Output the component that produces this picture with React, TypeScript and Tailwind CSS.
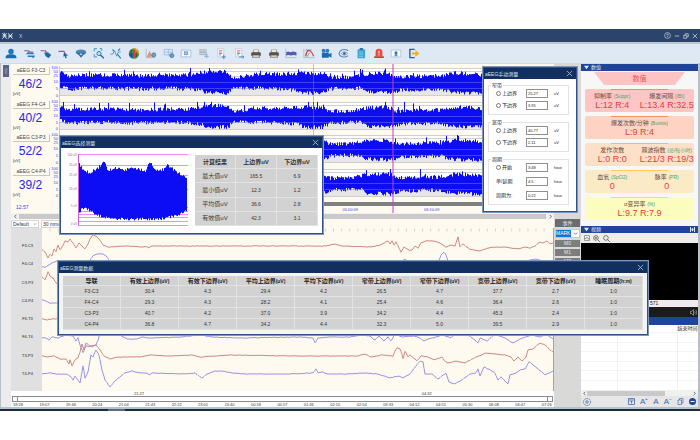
import { ReactNode } from "react";
import clsx from "clsx";

type Point = [number, number];

const CJK = "font-['Liberation_Sans','Noto_Sans_CJK_SC',sans-serif]";

const createRandom = (seed: number) => {
  let s = seed;
  return () => {
    s = (s * 16807) % 2147483647;
    return s / 2147483647;
  };
};

const sample = (points: Point[], x: number) => {
  for (let i = 1; i < points.length; i++) {
    const [x0, y0] = points[i - 1];
    const [x1, y1] = points[i];
    if (x <= x1) return y0 + ((y1 - y0) * (x - x0)) / (x1 - x0);
  }
  return points[points.length - 1][1];
};

// vertical bars between an upper and a lower envelope
const buildBars = (
  top: Point[],
  bottom: Point[],
  width: number,
  seed: number,
  jitter: number,
  spike: number,
) => {
  const random = createRandom(seed);
  let d = "";
  for (let x = 0; x < width; x++) {
    const peak = random() > 0.94 ? random() * spike : 0;
    const up = sample(top, x) - random() * jitter - peak;
    const down = sample(bottom, x) + random() * jitter - jitter / 2;
    d += `M${x + 0.5} ${Math.max(0, up).toFixed(1)}V${down.toFixed(1)}`;
  }
  return d;
};

// trace that follows its points, with small noise in between
const buildTrace = (points: Point[], seed: number) => {
  const random = createRandom(seed);
  const last = points[points.length - 1][0];
  let d = `M${points[0][0]} ${points[0][1]}`;
  for (let x = points[0][0] + 1; x <= last; x++) {
    const noise = (random() - 0.5) * 0.6;
    d += `L${x} ${(sample(points, x) + noise).toFixed(1)}`;
  }
  return d;
};

const aeegTop: Point[] = [
  [0, 6], [8, 10], [20, 9], [50, 9], [80, 10], [110, 9], [130, 9], [142, 6],
  [165, 5], [172, 11], [182, 11], [195, 8], [220, 8], [245, 7], [262, 8],
  [270, 11], [290, 11], [305, 8], [328, 7], [336, 11], [360, 10], [380, 10],
  [395, 7], [415, 8], [430, 12], [494, 10],
];
const aeegBottom: Point[] = [
  [0, 18], [8, 21], [40, 20], [80, 21], [110, 20], [140, 22], [148, 25],
  [168, 25], [173, 20], [200, 20], [236, 22], [244, 25], [262, 25], [270, 21],
  [300, 20], [306, 24], [330, 25], [340, 22], [380, 21], [390, 24], [415, 25],
  [494, 22],
];

const selectTop: Point[] = [
  [0, 12], [4, 18], [10, 20], [16, 17], [20, 15], [24, 8], [29, 18], [36, 15],
  [43, 18], [51, 16], [60, 17], [66, 19], [70, 9], [76, 18], [84, 17],
  [88, 12], [94, 17], [101, 22], [108, 25],
];
const selectBottom: Point[] = [
  [0, 60], [3, 54], [8, 55], [16, 60], [26, 64], [40, 65], [60, 65], [80, 65],
  [90, 63], [98, 61], [108, 57],
];

const aeegRows = [
  { label: "aEEG F3-C3", value: "46/2" },
  { label: "aEEG F4-C4", value: "40/2" },
  { label: "aEEG C3-P3", value: "52/2" },
  { label: "aEEG C4-P4", value: "39/2" },
];

const aeegScale = [
  { text: "100", height: "h-[4px]" },
  { text: "50", height: "h-[4px]" },
  { text: "25", height: "h-[4px]" },
  { text: "10", height: "h-[8px]" },
  { text: "5", height: "h-[6px]" },
  { text: "0", height: "h-[7px]" },
];

const channels = ["F3-C3", "F4-C4", "C3-P3", "C4-P4", "F3-T3", "F4-T4", "T3-P3", "T4-P4"];

const traces: { color: string; points: Point[] }[] = [
  {
    color: "#cf8880",
    points: [
      [42, 250], [45, 252], [48, 258], [50, 254], [52, 256], [54, 249], [56, 252],
      [58, 245], [60, 250], [62, 247], [65, 241], [68, 242], [70, 239], [73, 243],
      [76, 248], [79, 243], [82, 246], [85, 249], [88, 244], [90, 239], [93, 235],
      [96, 236], [99, 239], [103, 245], [108, 247], [125, 246], [147, 247],
      [149, 248], [151, 246], [230, 246], [325, 246], [335, 244], [342, 246],
      [371, 247], [380, 245], [388, 241], [390, 244], [392, 241], [394, 245],
      [396, 242], [398, 246], [401, 252], [404, 247], [409, 250], [412, 250],
      [415, 246], [418, 248], [421, 243], [425, 241], [433, 241], [440, 243],
      [446, 247], [450, 245], [455, 246], [458, 237], [460, 247], [463, 244],
      [469, 249], [474, 250], [480, 251], [488, 248], [495, 247], [505, 247],
      [518, 249], [524, 247], [530, 248], [535, 246], [540, 242], [543, 243],
      [547, 241], [550, 244], [553, 243],
    ],
  },
  {
    color: "#9595e6",
    points: [
      [42, 267], [46, 267], [50, 264], [54, 262], [58, 261], [86, 266], [90, 260],
      [93, 256], [97, 254], [103, 254], [106, 256], [110, 261], [115, 266],
      [390, 266], [402, 261], [405, 259], [408, 263], [438, 263], [441, 255],
      [444, 252], [446, 255], [449, 264], [520, 264], [530, 260], [536, 259], [553, 264],
    ],
  },
  {
    color: "#cf8880",
    points: [
      [42, 277], [45, 280], [48, 272], [50, 276], [53, 278], [56, 283], [60, 285], [553, 283],
    ],
  },
  {
    color: "#9595e6",
    points: [[42, 300], [46, 301], [50, 303], [58, 303], [553, 301]],
  },
  {
    color: "#cf8880",
    points: [[42, 319], [47, 320], [50, 319], [553, 319]],
  },
  {
    color: "#9595e6",
    points: [
      [42, 338], [46, 338], [49, 340], [52, 337], [58, 338], [66, 335], [73, 336],
      [76, 341], [78, 338], [80, 345], [83, 353], [86, 346], [92, 347], [96, 345],
      [98, 340], [100, 333], [117, 333], [123, 337], [128, 339], [137, 339],
      [142, 337], [150, 338], [180, 337], [200, 335], [212, 337], [240, 338],
      [300, 337], [313, 338], [315, 343], [318, 338], [330, 337], [350, 337],
      [362, 335], [370, 336], [375, 340], [379, 336], [384, 341], [388, 337],
      [391, 341], [395, 334], [402, 337], [414, 336], [420, 338], [424, 341],
      [428, 339], [436, 337], [443, 335], [451, 338], [456, 333], [468, 335],
      [475, 340], [478, 343], [480, 338], [487, 341], [495, 334], [505, 338],
      [513, 343], [520, 339], [532, 335], [540, 337], [546, 334], [553, 339],
    ],
  },
  {
    color: "#cf8880",
    points: [
      [42, 356], [48, 357], [54, 356], [60, 359], [66, 359], [69, 364], [70, 360],
      [72, 366], [75, 360], [78, 358], [80, 352], [82, 344], [84, 350], [86, 343],
      [90, 346], [96, 345], [100, 350], [104, 356], [110, 359], [118, 357],
      [140, 357], [150, 355], [170, 356], [192, 355], [200, 357], [230, 355],
      [300, 356], [357, 356], [365, 354], [371, 357], [382, 355], [393, 356],
      [395, 351], [397, 348], [400, 349], [402, 354], [403, 359], [405, 351],
      [408, 357], [410, 355], [414, 358], [417, 361], [421, 356], [428, 357],
      [434, 360], [442, 357], [445, 361], [448, 363], [456, 361], [465, 363],
      [474, 358], [486, 353], [505, 355], [511, 357], [514, 361], [518, 357],
      [522, 361], [526, 357], [528, 350], [533, 349], [540, 343], [545, 345],
      [550, 350], [553, 352],
    ],
  },
  {
    color: "#9595e6",
    points: [
      [42, 374], [50, 373], [56, 374], [66, 374], [70, 376], [73, 380], [75, 376],
      [80, 383], [83, 366], [85, 378], [88, 372], [91, 355], [93, 357], [96, 350],
      [99, 355], [102, 370], [105, 380], [110, 387], [116, 380], [125, 373],
      [132, 371], [140, 373], [147, 373], [149, 375], [152, 373], [185, 374],
      [195, 373], [202, 378], [207, 374], [215, 371], [222, 371], [232, 373],
      [245, 374], [290, 374], [313, 373], [316, 369], [318, 373], [322, 372],
      [328, 374], [345, 374], [365, 373], [378, 374], [390, 378], [398, 376],
      [403, 378], [410, 374], [416, 366], [420, 361], [423, 362], [425, 374],
      [432, 374], [438, 379], [446, 373], [449, 382], [454, 384], [462, 380],
      [470, 374], [476, 373], [478, 369], [480, 376], [484, 367], [490, 370],
      [495, 373], [498, 380], [501, 377], [508, 384], [510, 375], [516, 373],
      [520, 370], [525, 369], [529, 362], [532, 364], [537, 368], [545, 375],
      [549, 373], [553, 371],
    ],
  },
];

const timeline = [
  "18:28", "19:07", "19:46", "20:24", "21:04", "21:43", "22:22", "23:01", "23:40",
  "00:18", "00:57", "01:36", "02:15", "02:54", "03:33", "04:12", "04:51", "05:30",
  "06:08", "06:47", "07:26",
];

const resultRows = [
  ["最大值uV", "165.5", "6.9"],
  ["最小值uV", "12.3", "1.2"],
  ["平均值uV", "36.6", "2.8"],
  ["有效值uV", "42.3", "3.1"],
];

const dataHeaders = [
  ["导联", ""],
  ["有效上边界", "(uV)"],
  ["有效下边界", "(uV)"],
  ["平均上边界", "(uV)"],
  ["平均下边界", "(uV)"],
  ["窄带上边界", "(uV)"],
  ["窄带下边界", "(uV)"],
  ["宽带上边界", "(uV)"],
  ["宽带下边界", "(uV)"],
  ["睡眠周期", "(h:m)"],
];

const dataRows = [
  ["F3-C3", "30.4", "4.3", "29.4", "4.2", "26.5", "4.7", "37.7", "2.7", "1:0"],
  ["F4-C4", "29.3", "4.3", "28.2", "4.1", "25.4", "4.6", "36.4", "2.6", "1:0"],
  ["C3-P3", "40.7", "4.2", "37.0", "3.9", "34.2", "4.4", "45.3", "2.4", "1:0"],
  ["C4-P4", "36.8", "4.7", "34.2", "4.4", "32.3", "5.0", "39.5", "2.9", "1:0"],
];

const cards = [
  {
    bg: "bg-[#fec5c5]",
    line: "bg-[#fb7f7f]",
    items: [
      { name: "抑制率", unit: "(Suppr)", value: "L:12 R:4" },
      { name: "爆发间隔", unit: "(IBI)", value: "L:13.4 R:32.5" },
    ],
  },
  {
    bg: "bg-[#fdd3c4]",
    line: "bg-[#fb8f66]",
    items: [{ name: "爆发次数/分钟", unit: "(Bursts)", value: "L:9 R:4" }],
  },
  {
    bg: "bg-[#fde0c8]",
    line: "bg-[#fdb45c]",
    items: [
      { name: "发作次数", unit: "", value: "L:0 R:0" },
      { name: "棘波指数", unit: "(总/每小时)", value: "L:21/3 R:19/3" },
    ],
  },
  {
    bg: "bg-[#fbeac6]",
    line: "bg-[#fbcd55]",
    items: [
      { name: "血氧", unit: "(SpO2)", value: "0" },
      { name: "脉率", unit: "(PR)", value: "0" },
    ],
  },
  {
    bg: "bg-[#fcfcbf]",
    line: "bg-[#f6dc6a]",
    items: [{ name: "α变异率", unit: "(%)", value: "L:9.7 R:7.9" }],
  },
];

const measureGroups = [
  {
    title: "窄带",
    gap: "gap-[3px]",
    fields: [
      { id: "narrow-up", label: "上边界", value: "25.27", unit: "uV", radio: true },
      { id: "narrow-down", label: "下边界", value: "3.95", unit: "uV", radio: true },
    ],
  },
  {
    title: "宽带",
    gap: "gap-[3px]",
    fields: [
      { id: "wide-up", label: "上边界", value: "40.77", unit: "uV", radio: true },
      { id: "wide-down", label: "下边界", value: "2.11", unit: "uV", radio: true },
    ],
  },
  {
    title: "周期",
    gap: "gap-[5px]",
    fields: [
      { id: "cycle-start", label: "开始", value: "3:48", unit: "hour", radio: true },
      { id: "cycle-end", label: "单/延期", value: "4:5", unit: "hour", radio: false },
      { id: "cycle-total", label: "周期为:", value: "0:22", unit: "hour", radio: false },
    ],
  },
];

const paper = (
  <>
    <path d="M3 1h9v12H3z" fill="#f8fafc" stroke="#b9c4d2" />
    <path d="M5 4h5M5 8h5" stroke="#e0707c" strokeWidth="1.4" />
    <path d="M5 6h4M5 10h3" stroke="#7ba3d2" strokeWidth="1.4" />
  </>
);

const printer = (
  <>
    <path d="M4 2h8l1 5H3z" fill="#a59c8a" />
    <path d="M5 3h6v3H5z" fill="#efe9d8" />
    <rect x="1" y="6" width="14" height="6" rx="2" fill="#55534e" />
    <path d="M3 10h10l1 4H2z" fill="#8b877e" />
    <path d="M4 11h8v2H4z" fill="#dcd8cc" />
  </>
);

const tools: { name: string; icon: ReactNode }[] = [
  {
    name: "病人",
    icon: (
      <>
        <circle cx="8" cy="5" r="4" fill="#1d78bd" />
        <path d="M0 15c0-5 3-6 8-6s8 1 8 6z" fill="#1b6cae" />
      </>
    ),
  },
  {
    name: "导联",
    icon: (
      <>
        <path d="M1 4h6l3 2h4" stroke="#a05a78" strokeWidth="1.6" />
        <path d="M15 8H6l2-2M6 12h9l-2 2" stroke="#2a7fc1" strokeWidth="2.2" />
      </>
    ),
  },
  {
    name: "标记",
    icon: (
      <>
        <path d="M0 4h7l2 2" stroke="#a05a78" strokeWidth="1.8" />
        <path d="M6 7h5l4 3-3 4-4-2z" stroke="#1c67a8" fill="#1c67a8" />
      </>
    ),
  },
  {
    name: "选择",
    icon: (
      <>
        <path d="M0 5h8l1 2" stroke="#a05a78" strokeWidth="1.8" />
        <path d="M8 6l6 5-3 .4 1 3-2 .4-1-3-2 1z" fill="#1c67a8" />
      </>
    ),
  },
  {
    name: "分析",
    icon: (
      <>
        <ellipse cx="8" cy="6" rx="7.5" ry="3.8" fill="#4d89b8" />
        <path d="M2 7l6 7 6-7" fill="#2d6798" />
        <circle cx="8" cy="9" r="2" fill="#cfe2f2" stroke="#28618f" />
      </>
    ),
  },
  {
    name: "放大",
    icon: (
      <>
        <path d="M1 5V1h4M9 1h3v3M1 9v4h4" stroke="#3b8ec9" strokeWidth="1.4" />
        <circle cx="8" cy="8" r="3" fill="#c7e0f5" stroke="#2a78b8" strokeWidth="1.4" />
        <path d="M10 10l5 5" stroke="#1c5c9c" strokeWidth="2" />
      </>
    ),
  },
  {
    name: "波形",
    icon: (
      <>
        <path d="M0 9h3l3-5 3 8 2-6h4" stroke="#3d94c6" strokeWidth="1.3" />
        <path d="M10 9l5 6M3 2l2 3M11 4l3-3" stroke="#2a78b8" strokeWidth="1.6" />
      </>
    ),
  },
  {
    name: "地形图",
    icon: (
      <>
        <circle cx="8" cy="8" r="7.5" fill="#3b8e62" />
        <path d="M8 .5a7.500 7.500 0 0 1 7.500 7.500H8z" fill="#e5a622" />
        <path d="M.5 8a7.500 7.500 0 0 0 5 7L8 8z" fill="#225ea8" />
        <path d="M6 2l2 12 3-1-1-11z" fill="#cf4423" />
        <path d="M4 3v9M12 5v7" stroke="#3a3028" />
      </>
    ),
  },
  {
    name: "趋势",
    icon: (
      <>
        <path d="M1 1v13h13" stroke="#9aa8b8" />
        <path d="M2 13l4-9 4 9z" fill="#e58a78" />
        <path d="M6 13l3-5 2 5z" fill="#ebbd5c" />
        <circle cx="12" cy="10" r="3" fill="#6f9fca" stroke="#3b73a6" />
      </>
    ),
  },
  {
    name: "窗口",
    icon: (
      <>
        <path d="M1 2h12v8H1zM7 2v8M1 6h12" stroke="#86aed2" fill="#e3eef8" />
        <circle cx="12" cy="11" r="3" fill="#6d9ac2" stroke="#3b73a6" />
      </>
    ),
  },
  {
    name: "视图",
    icon: (
      <>
        <path d="M1 3h14v10H1z" stroke="#8fb0cc" fill="#f5f9fd" />
        <path d="M5 5h6v5H5z" fill="#4389c4" />
        <path d="M8 5v5M5 7.500h6" stroke="#e3eef8" />
        <path d="M8 11v2" stroke="#8fb0cc" />
      </>
    ),
  },
  {
    name: "列表",
    icon: (
      <>
        <path d="M1 3h11M1 6h11M1 9h11" stroke="#9a9fa6" strokeWidth="1.6" />
        <path d="M8 12h7M12 8v7" stroke="#77a6d4" strokeWidth="1.3" />
      </>
    ),
  },
  {
    name: "新建报告",
    icon: (
      <>
        {paper}
        <path d="M9 13h6M12 10v6" stroke="#3f86c6" strokeWidth="1.4" />
      </>
    ),
  },
  {
    name: "导出报告",
    icon: (
      <>
        {paper}
        <path d="M8 13h7M13 11l2 2-2 2" stroke="#3f86c6" strokeWidth="1.4" />
      </>
    ),
  },
  { name: "打印", icon: printer },
  { name: "打印预览", icon: printer },
  {
    name: "振幅",
    icon: (
      <>
        <path d="M.5 1v13H16" stroke="#8fb4b8" />
        <path d="M1 6l3-1 3 1 4-1 5 1v5l-4-1-4 1-4-1-3 1z" fill="#5c56b0" />
      </>
    ),
  },
  {
    name: "测量",
    icon: (
      <>
        <path d="M.5 1v13H16" stroke="#8fb4b8" />
        <path d="M3 12c2-9 4-9 6-8s4 3 6 8" stroke="#cf4b4b" strokeWidth="2" />
        <path d="M3 3h9M5 13l4-6" stroke="#74697c" />
      </>
    ),
  },
  {
    name: "摄像",
    icon: (
      <>
        <circle cx="4.500" cy="4" r="2.800" fill="#2f7cc0" />
        <circle cx="10" cy="4" r="2.800" fill="#2f7cc0" />
        <path d="M2 7h10v7H2zM12 9l4-2v7l-4-2z" fill="#2168a8" />
      </>
    ),
  },
  {
    name: "回放",
    icon: (
      <>
        <path d="M14 4C9 0 1 3 1 8s8 7 13 3" stroke="#6289b8" strokeWidth="1.5" />
        <path d="M4 8c2-3 7-3 9 0-2 3-7 3-9 0z" stroke="#5079aa" fill="#dfe9f5" />
        <circle cx="8.500" cy="8" r="1.800" fill="#2a5c98" />
      </>
    ),
  },
  {
    name: "记录",
    icon: (
      <>
        <path d="M3 2h11v13H3z" fill="#3ba5cf" />
        <path d="M6 0h5v3H6z" fill="#2b7ba6" />
        <path d="M5 6h6M5 9h6M5 12h6" stroke="#a8dcf0" />
      </>
    ),
  },
  {
    name: "报警",
    icon: (
      <>
        <path d="M3 12V6a5 5 0 0 1 10 0v6z" fill="#ee4a3a" />
        <path d="M1 12h14v2.500H1z" fill="#c93a2c" />
        <path d="M8 4v4M8 9v2" stroke="#fff" strokeWidth="1.5" />
      </>
    ),
  },
  {
    name: "截屏",
    icon: (
      <>
        <path d="M1 3h14v10H1z" fill="#f8fbfe" stroke="#9db4cc" />
        <circle cx="8" cy="7" r="2.200" fill="#2b74b8" />
        <path d="M6 9h4v3H6z" fill="#4a90cc" />
      </>
    ),
  },
  {
    name: "退出",
    icon: (
      <>
        <path d="M9 2H2v12h7" stroke="#2d5f96" strokeWidth="2" />
        <path d="M5 6.500h5V3l6 5-6 5V9.500H5z" fill="#f3b21c" />
      </>
    ),
  },
];

function CloseIcon({ className }: { className?: string }) {
  return (
    <svg viewBox="0 0 8 8" className={className} fill="none" stroke="currentColor">
      <path d="M1 1l6 6M7 1L1 7" />
    </svg>
  );
}

function Dialog({
  title,
  className,
  children,
}: {
  title: string;
  className: string;
  children: ReactNode;
}) {
  return (
    <section
      className={clsx(
        "absolute flex flex-col border border-[#2f5288] bg-white shadow-[0_0_0_1px_#7f95b8]",
        className,
      )}
    >
      <header className="flex h-[11px] shrink-0 items-center justify-between bg-[#12305f] pr-[3px] pl-px">
        <h2 className="text-[5px] leading-[8px] text-[#dbe4f2]">{title}</h2>
        <button type="button" aria-label="关闭" className="text-[#a9b8cf]">
          <CloseIcon className="size-[7px]" />
        </button>
      </header>
      {children}
    </section>
  );
}

function TitleBar() {
  return (
    <header className="flex h-[13px] items-center justify-between bg-[#2a446b] px-[2px] text-[#c8d3e2]">
      <div className="flex items-center gap-[6px]">
        <svg viewBox="0 0 24 16" className="h-[8px] w-[11px]" fill="none" stroke="#e6edf5" strokeWidth="2">
          <path d="M1 2l9 12M10 2L1 14M5 1v5M14 2l4 6 5-6M18 8l-5 6M18 8l5 6M13 8h10M1 8h9" />
        </svg>
        <span className="text-[5px] leading-[8px]">X</span>
      </div>
      <div className="flex items-center gap-[3px]">
        <button type="button" aria-label="帮助">
          <svg viewBox="0 0 12 12" className="size-[7px]" fill="none" stroke="currentColor" strokeWidth="1.2">
            <circle cx="6" cy="6" r="5" />
            <path d="M4.500 5c0-2 3-2 3 0 0 1-1.500 1-1.500 2v1.500" />
          </svg>
        </button>
        <button type="button" aria-label="最小化">
          <svg viewBox="0 0 8 8" className="size-[6px]" stroke="currentColor">
            <path d="M1 4h6" />
          </svg>
        </button>
        <button type="button" aria-label="还原">
          <svg viewBox="0 0 8 8" className="size-[6px]" fill="none" stroke="currentColor">
            <path d="M1 3h4v4H1zM3 3V1h4v4H5" />
          </svg>
        </button>
        <button type="button" aria-label="关闭">
          <CloseIcon className="size-[6px]" />
        </button>
      </div>
    </header>
  );
}

function Toolbar() {
  return (
    <nav className="border-t-2 border-[#c3c7cc] bg-[#dfe9f6]">
      <div className="ml-[5px] flex h-[19px] w-[415px] items-center justify-between">
        {tools.map((tool) => (
          <button type="button" key={tool.name} aria-label={tool.name}>
            <svg viewBox="0 0 16 16" className="h-[11px] w-[12px]" fill="none">
              {tool.icon}
            </svg>
          </button>
        ))}
      </div>
    </nav>
  );
}

function AeegPlot({ seed }: { seed: number }) {
  return (
    <svg viewBox="0 0 494 28" preserveAspectRatio="none" className="h-[28px] w-full">
      <rect width="494" height="28" fill="#ffffff" />
      <rect y="20" width="494" height="8" fill="#e6e6e6" />
      <path d="M0 .5H494M0 3.500H494M0 8.500H494M0 14.500H494M0 20.500H494M0 27.500H494" stroke="#cfcfcf" />
      <path
        d={buildBars(aeegTop, aeegBottom, 494, seed, 4, 8)}
        stroke="#0d0df5"
        fill="none"
      />
      <path d="M0 14.500H494M0 20.500H494" stroke="#8f8fff" strokeOpacity=".4" />
    </svg>
  );
}

function AeegPanel() {
  return (
    <div className="bg-[#fffaf0] pt-[2px]">
      <div className="relative">
        <div className="flex h-[134px] flex-col">
          {aeegRows.map((row, i) => (
            <div key={row.label} className="flex flex-1">
              <div className="flex w-[39px] flex-col">
                <h3 className="mt-px ml-[2px] h-[8px] border-r border-b border-[#c9c6bd] text-center text-[5px] leading-[7px] text-[#444]">
                  {row.label}
                </h3>
                <strong className="pt-[3px] text-center text-[12px] leading-[13px] font-normal text-[#2626e0]">
                  {row.value}
                </strong>
                <span className="pl-[2px] text-[4px] leading-[5px] text-[#333]">[uV]</span>
              </div>
              <ol className="flex w-[10px] flex-col border-r border-[#c9c6bd] pr-px text-right text-[4px] text-[#3a3ae6]">
                {aeegScale.map((mark) => (
                  <li key={mark.text} className={clsx("flex items-center justify-end", mark.height)}>
                    {mark.text}
                  </li>
                ))}
              </ol>
              <div className="flex-1 pt-[2px]">
                <AeegPlot seed={i * 97 + 41} />
              </div>
            </div>
          ))}
        </div>
        <div className="flex h-[13px]">
          <time className="w-[49px] pt-[3px] pl-[5px] text-[5px] leading-[8px] text-[#3a3ae6]">12:57</time>
          <div className="flex-1 pt-[2px]">
            <div className="h-[4px] bg-[#7f7f7f]" />
            <div className="flex justify-around pt-px pl-[5px] text-[4px] leading-[6px] text-[#3a3ae6]">
              {["00:00:09", "01:15:09", "02:30:09", "05:00:09", "06:10:09", "07:20:09"].map((t) => (
                <time key={t}>{t}</time>
              ))}
            </div>
          </div>
        </div>
        <div className="absolute -top-[2px] left-[55.6%] h-[149px] w-px bg-[#4caf50]/50" />
        <div className="absolute -top-[2px] left-[70.1%] h-[149px] w-[2px] bg-[#c63cc6]/50" />
      </div>
      <div className="flex h-[6px] items-center bg-[#f0f0f0] text-[#555]">
        <button type="button" aria-label="向左滚动" className="flex w-[8px] justify-center">
          <svg viewBox="0 0 6 6" className="size-[5px]" fill="none" stroke="currentColor">
            <path d="M4 1L2 3l2 2" />
          </svg>
        </button>
        <div className="h-[5px] flex-1 bg-[#c9c9c9]" />
        <button type="button" aria-label="向右滚动" className="flex w-[8px] justify-center">
          <svg viewBox="0 0 6 6" className="size-[5px]" fill="none" stroke="currentColor">
            <path d="M2 1l2 2-2 2" />
          </svg>
        </button>
      </div>
    </div>
  );
}

function EegPanel() {
  return (
    <div className="bg-[#fffaf0]">
      <div className="flex h-[9px] items-center gap-[2px] text-[5px] leading-[7px] text-[#333]">
        <div className="relative">
          <select
            aria-label="导联方案"
            className="block h-[8px] w-[28px] appearance-none border border-[#d5d5d5] bg-white pl-px"
            defaultValue="Default"
          >
            <option>Default</option>
          </select>
          <svg viewBox="0 0 6 6" className="pointer-events-none absolute top-[2px] right-[2px] size-[4px]" fill="none" stroke="#888">
            <path d="M1 2l2 2 2-2" />
          </svg>
        </div>
        <select
          aria-label="走纸速度"
          className="h-[8px] w-[28px] appearance-none border border-[#d5d5d5] bg-white pl-px"
          defaultValue="30 mm/s"
        >
          <option>30 mm/s</option>
        </select>
      </div>
      <div className="flex h-[163px]">
        <ul className="flex w-[31px] flex-col bg-[#e0e0e0] pt-[9px] pb-[8px] text-[4px] text-[#222]">
          {channels.map((name) => (
            <li key={name} className="flex flex-1 items-center justify-center pl-[2px]">
              {name}
            </li>
          ))}
        </ul>
        <div className="min-w-0 flex-1 border-r border-[#c08ad8]">
          <svg viewBox="42 228 511 163" preserveAspectRatio="none" className="h-full w-full" fill="none">
            {Array.from({ length: 62 }, (_, i) => (
              <path key={i} d={`M${50 + i * 8.1} 228.500v3`} stroke="#d8d4c8" />
            ))}
            {traces.map((trace, i) => (
              <path key={i} d={buildTrace(trace.points, i * 31 + 7)} stroke={trace.color} strokeWidth="1" />
            ))}
          </svg>
        </div>
      </div>
      <div className="bg-white text-[4px] leading-[5px] text-[#333]">
        <div className="flex h-[5px]">
          <span className="w-[53%] pl-[123px]">21:27</span>
          <span className="flex-1 pl-[123px]">04:32</span>
        </div>
        <div className="mx-px flex h-[6px] justify-between border border-[#8a8a8a]">
          <span className="w-[5px] border-r border-[#8a8a8a]" />
          <span className="w-[5px] border-l border-[#8a8a8a]" />
        </div>
        <div className="flex h-[5px] justify-between pr-[2px] pl-[2px]">
          {timeline.map((t) => (
            <time key={t}>{t}</time>
          ))}
        </div>
      </div>
    </div>
  );
}

function EventColumn() {
  return (
    <div className="flex w-[27px] flex-col gap-[2px] bg-[#d9d9d7] px-px pt-[155px] text-center text-[5px] text-[#e8e8e8]">
      <h3 className="h-[8px] bg-[#6c6c6c] leading-[8px]">事件</h3>
      <div className="relative h-[9px] border border-[#c8c8c8] bg-white">
        <select
          aria-label="事件"
          className="block h-[7px] w-[15px] appearance-none bg-[#0b78d6] text-[5px] leading-[7px] text-white"
          defaultValue="MARK"
        >
          <option>MARK</option>
        </select>
        <svg viewBox="0 0 6 6" className="pointer-events-none absolute top-[1px] right-px size-[5px]" fill="none" stroke="#666">
          <path d="M1 2l2 2 2-2" />
        </svg>
      </div>
      {["M0", "M1", "M2"].map((mark) => (
        <button type="button" key={mark} className="h-[7px] bg-[#7d7d7d] leading-[7px]">
          {mark}
        </button>
      ))}
    </div>
  );
}

function PanelHeader({ title, children }: { title: string; children?: ReactNode }) {
  return (
    <header className="flex h-[7px] items-center justify-between bg-[#1f449c] px-[3px] text-[#e6ecf8]">
      <h3 className="flex items-center gap-[2px] text-[5px] leading-[7px]">
        <svg viewBox="0 0 6 6" className="size-[5px]" fill="currentColor">
          <path d="M0 1h6L3 5z" />
        </svg>
        {title}
      </h3>
      {children}
    </header>
  );
}

function ValuesPanel() {
  return (
    <div className="bg-[#f7f7f8]">
      <PanelHeader title="数值" />
      <div className="flex flex-col gap-[4px] px-[4px] pt-px pb-[6px]">
        <h4 className="mx-auto h-[13px] w-[91px] bg-[#fdc4c4] text-center text-[7px] leading-[14px] text-[#e8505a] [clip-path:polygon(0_0,100%_0,89%_100%,11%_100%)]">
          数值
        </h4>
        {cards.map((card) => (
          <div key={card.bg} className={clsx("flex h-[23px] flex-col rounded-[2px]", card.bg)}>
            <div className={clsx("mx-auto h-px w-[57px] shrink-0", card.line)} />
            <div className="flex">
              {card.items.map((item) => (
                <div key={item.name} className="flex-1 text-center whitespace-nowrap">
                  <p className="pt-[2px] text-[6px] leading-[8px] text-[#6b4a42]">
                    {item.name} <span className="text-[5px] text-[#3fa56c]">{item.unit}</span>
                  </p>
                  <p className="text-[9px] leading-[11px] text-[#e93a40]">{item.value}</p>
                </div>
              ))}
            </div>
          </div>
        ))}
      </div>
    </div>
  );
}

function VideoPanel() {
  return (
    <div>
      <PanelHeader title="视频">
        <svg viewBox="0 0 8 8" className="size-[5px]" fill="currentColor">
          <path d="M0 0h1.500v8H0zM6.500 0H8v8H6.500zM2 4l2-3v6zM6 4L4 1v6z" />
        </svg>
      </PanelHeader>
      <div className="flex h-[10px] items-center gap-[3px] bg-[#ededee] px-[3px] text-[#555]">
        <button type="button" aria-label="截图">
          <svg viewBox="0 0 12 12" className="size-[6px]" fill="none" stroke="currentColor">
            <path d="M1 1h10v10H1zM1 7h3l2-3 2 4h3" />
          </svg>
        </button>
        <button type="button" aria-label="放大">
          <svg viewBox="0 0 12 12" className="size-[7px]" fill="none" stroke="currentColor" strokeWidth="1.3">
            <circle cx="5" cy="5" r="4" />
            <path d="M8 8l4 4M3 5h4M5 3v4" />
          </svg>
        </button>
        <button type="button" aria-label="缩小">
          <svg viewBox="0 0 12 12" className="size-[7px]" fill="none" stroke="currentColor" strokeWidth="1.3">
            <circle cx="5" cy="5" r="4" />
            <path d="M8 8l4 4" />
          </svg>
        </button>
      </div>
      <div className="h-[57px] bg-black" />
      <p className="h-[7px] bg-[#f0ecec] pl-[69px] text-[5px] leading-[7px] text-[#222]">571</p>
      <div className="flex h-[10px] items-center justify-end bg-[#1b1b1b] px-px">
        <svg viewBox="0 0 12 12" className="size-[7px]" fill="none" stroke="#cfcfcf">
          <path d="M1 4h2l3-3v10L3 8H1zM8 4c1 1 1 3 0 4M10 2c2 2 2 6 0 8" />
        </svg>
      </div>
    </div>
  );
}

function EventTable() {
  return (
    <div className="flex flex-1 flex-col">
      <div className="h-[8px] bg-[#1f449c]" />
      <table className="w-full flex-1 table-fixed bg-white text-[5px] leading-[7px] text-[#222]">
        <thead>
          <tr>
            <th className="w-[36px]" />
            <th className="border-x border-[#f0f0f0]" />
            <th className="w-[21px] text-left font-normal whitespace-nowrap">结束时间</th>
          </tr>
        </thead>
        <tbody>
          {[0, 1, 2, 3, 4, 5].map((row) => (
            <tr key={row} className="border-t border-[#f3f3f3]">
              <td className="h-[9px]" />
              <td className="border-x border-[#f0f0f0]" />
              <td />
            </tr>
          ))}
        </tbody>
      </table>
      <div className="flex h-[6px] items-center bg-[#f0f0f0] px-px text-[#555]">
        <svg viewBox="0 0 6 6" className="size-[5px]" fill="none" stroke="currentColor">
          <path d="M4 1L2 3l2 2" />
        </svg>
        <div className="h-[5px] w-[78px] bg-[#c9c9c9]" />
        <svg viewBox="0 0 6 6" className="ml-auto size-[5px]" fill="none" stroke="currentColor">
          <path d="M2 1l2 2-2 2" />
        </svg>
      </div>
      <footer className="flex h-[11px] items-center gap-[5px] bg-[#e6e6e7] px-[2px] text-[8px] leading-[9px] text-[#3a63ad]">
        <button type="button" aria-label="设置" className="mr-auto">
          <svg viewBox="0 0 16 16" className="size-[8px]" fill="none" stroke="currentColor" strokeWidth="1.5">
            <circle cx="8" cy="8" r="7" strokeDasharray="3 1" />
            <circle cx="8" cy="8" r="2.500" />
          </svg>
        </button>
        <button type="button" aria-label="保存">
          <svg viewBox="0 0 14 14" className="size-[7px]" fill="none" stroke="currentColor" strokeWidth="1.5">
            <path d="M1 1h12v12H1zM1 4h12M7 6v5M5 8l2-2 2 2" />
          </svg>
        </button>
        <button type="button">A⁺</button>
        <button type="button">A</button>
        <button type="button">A⁻</button>
        <button type="button" aria-label="复制">
          <svg viewBox="0 0 14 14" className="size-[7px]" fill="none" stroke="currentColor" strokeWidth="1.3">
            <path d="M2 4h7v9H2zM5 4V1h7v9H9" />
          </svg>
        </button>
        <button type="button" aria-label="删除">
          <svg viewBox="0 0 14 14" className="size-[7px]">
            <circle cx="7" cy="7" r="7" fill="#1f449c" />
            <path d="M3 7h8" stroke="#fff" strokeWidth="2" />
          </svg>
        </button>
      </footer>
    </div>
  );
}

function SelectionDialog() {
  const scale = [
    { text: "100 uV", height: "h-[10px]" },
    { text: "50 uV", height: "h-[11px]" },
    { text: "25 uV", height: "h-[10px]" },
    { text: "10 uV", height: "h-[18px]" },
    { text: "5 uV", height: "h-[18px]" },
    { text: "0 uV", height: "h-[18px]" },
  ];

  return (
    <Dialog title="aEEG选择测量" className="top-[107px] left-[60px] w-[263px]">
      <div className="flex h-[85px]">
        <ol className="flex w-[17px] flex-col pt-[2px] text-[3px] text-[#b05a6a]">
          {scale.map((mark) => (
            <li key={mark.text} className={clsx("flex items-center justify-end pr-px", mark.height)}>
              {mark.text}
            </li>
          ))}
        </ol>
        <svg viewBox="0 0 110 74" className="mt-[6px] h-[74px] w-[110px]" fill="none">
          <path d="M0 .5H110M0 11.500H110M0 21.500H110M0 35.500H110M0 53.500H110M0 57.500H110M0 60.500H110M0 63.500H110M0 67.500H110M0 71.500H110" stroke="#ee8cf0" />
          <path d="M.5 0V72" stroke="#d060d8" />
          <path
            d={buildBars(selectTop, selectBottom, 108, 53, 3, 4)}
            stroke="#0d0df5"
            transform="translate(1 0)"
          />
        </svg>
        <table className="mt-[7px] ml-[7px] h-[71px] w-[123px] table-fixed border-separate border-spacing-0 bg-[#d2d2d2] text-center text-[6px] leading-[8px] text-[#333]">
          <thead>
            <tr>
              {["计算结果", "上边界uV", "下边界uV"].map((name) => (
                <th key={name} className="h-[14px] border-r border-b border-[#e2e2e2] p-0 font-bold">
                  {name}
                </th>
              ))}
            </tr>
          </thead>
          <tbody>
            {resultRows.map((row) => (
              <tr key={row[0]}>
                {row.map((cell, i) => (
                  <td key={i} className={clsx("h-[14px] border-r border-b border-[#e2e2e2] p-0", i > 0 && "text-[5px]")}>
                    {cell}
                  </td>
                ))}
              </tr>
            ))}
          </tbody>
        </table>
      </div>
    </Dialog>
  );
}

function ManualDialog() {
  return (
    <Dialog title="aEEG手动测量" className="top-[38px] left-[483px] w-[94px]">
      <form className="flex flex-col gap-[4px] px-[4px] pt-[3px] pb-[6px] text-[5px] leading-[7px] text-[#222]">
        {measureGroups.map((group) => (
          <fieldset key={group.title} className="mr-[3px] border border-[#e2e2e2] pb-[4px]">
            <legend className="ml-[2px] px-px">{group.title}</legend>
            <div className={clsx("flex flex-col", group.gap)}>
              {group.fields.map((field) => (
                <div key={field.id} className="flex h-[9px] items-center">
                  <div className="flex w-[37px] items-center gap-px pl-[7px]">
                    {field.radio && (
                      <input
                        type="radio"
                        name="boundary"
                        aria-label={`${group.title}${field.label}`}
                        className="size-[5px] appearance-none rounded-full border border-[#777]"
                      />
                    )}
                    <label htmlFor={field.id} className="whitespace-nowrap">
                      {field.label}
                    </label>
                  </div>
                  <input
                    id={field.id}
                    defaultValue={field.value}
                    className="h-[9px] w-[22px] border border-[#8f8f8f] pl-px text-[4px]"
                  />
                  <span className="pl-[6px] text-[4px]">{field.unit}</span>
                </div>
              ))}
            </div>
          </fieldset>
        ))}
      </form>
    </Dialog>
  );
}

function DataDialog() {
  return (
    <Dialog title="aEEG测量数据" className="top-[232px] left-[58px] w-[590px]">
      <div className="bg-[#f4f4f5] px-[4px] pt-[3px] pb-[4px]">
        <table className="w-full table-fixed border-separate border-spacing-0 bg-[#d2d2d2] text-center text-[5px] leading-[8px] text-[#333]">
          <thead>
            <tr>
              {dataHeaders.map(([name, unit]) => (
                <th key={name} className="h-[10px] border-r border-b border-[#e2e2e2] p-0 text-[6px] font-bold whitespace-nowrap text-[#222]">
                  {name}
                  <span className="text-[5px]">{unit}</span>
                </th>
              ))}
            </tr>
          </thead>
          <tbody>
            {dataRows.map((row) => (
              <tr key={row[0]}>
                {row.map((cell, i) => (
                  <td key={i} className="h-[11px] border-r border-b border-[#e2e2e2] p-0">
                    {cell}
                  </td>
                ))}
              </tr>
            ))}
          </tbody>
        </table>
      </div>
    </Dialog>
  );
}

function App() {
  return (
    <div className={clsx("min-h-screen w-full bg-white pt-[29px]", CJK)}>
      <div className="relative">
        <TitleBar />
        <Toolbar />
        <main className="flex border-r-2 border-b-2 border-l border-[#b7c0c8] bg-[#d9d9d7] pt-px">
          <aside className="w-[10px] bg-[#ececec] px-[2px] pt-px">
            <button type="button" aria-label="展开" className="flex h-[12px] w-[6px] items-center justify-center bg-[#5b6580]">
              <svg viewBox="0 0 6 12" className="h-[10px] w-[4px]" stroke="#b9c1d2">
                <path d="M1 3h4M1 6h4M1 9h4" />
              </svg>
            </button>
          </aside>
          <div className="min-w-0 flex-1">
            <AeegPanel />
            <EegPanel />
          </div>
          <EventColumn />
          <div className="flex w-[117px] flex-col">
            <ValuesPanel />
            <VideoPanel />
            <EventTable />
          </div>
        </main>
        <footer className="flex h-[2px] bg-[#1b2a3c]">
          <span className="ml-[108px] w-[17px] bg-[#5c6a7a]" />
        </footer>
        <SelectionDialog />
        <ManualDialog />
        <DataDialog />
      </div>
    </div>
  );
}

export default App;
